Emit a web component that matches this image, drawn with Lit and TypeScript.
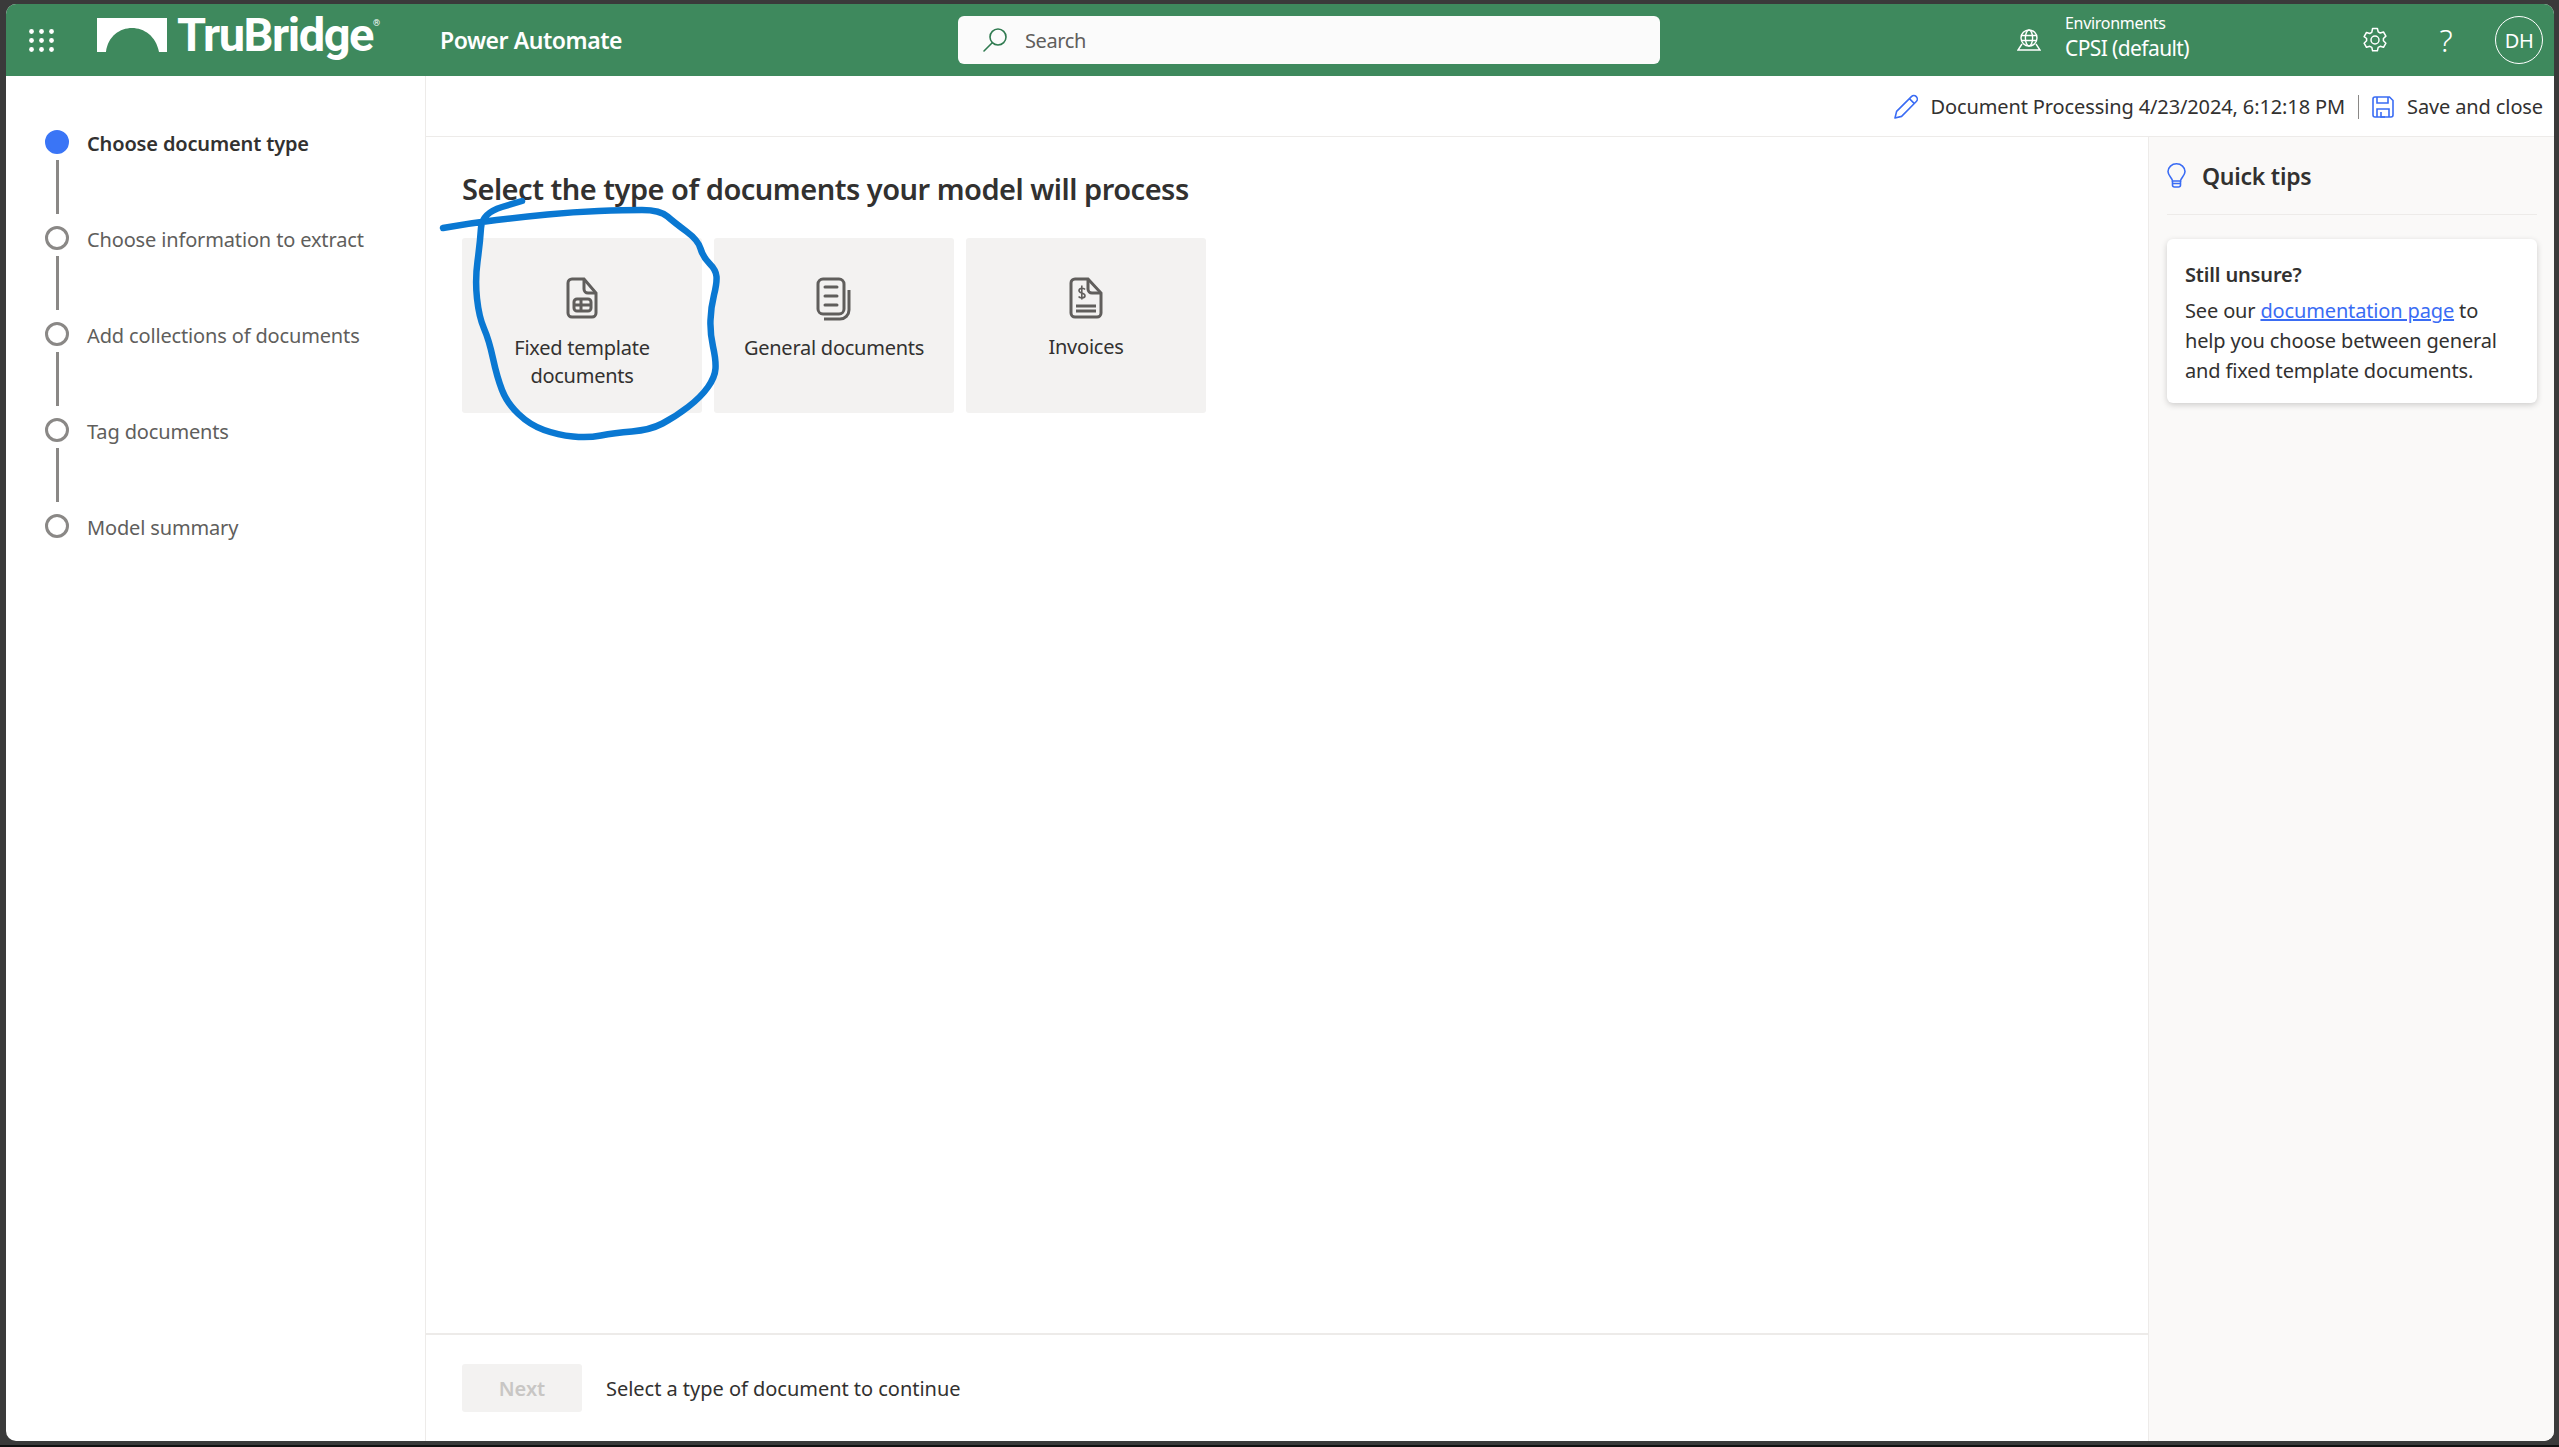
import { LitElement, css, html, svg } from "lit";
import { customElement } from "lit/decorators.js";

const steps = [
  "Choose document type",
  "Choose information to extract",
  "Add collections of documents",
  "Tag documents",
  "Model summary",
];

// freehand pen mark over the first card, points read off the screenshot
const scribble: [number, number][] = [
  [443, 228], [471, 223], [522, 217], [573, 212], [624, 210], [660, 210], [675, 223],
  [698, 240], [703, 257], [716, 270], [717, 283], [711, 307], [710, 333], [716, 360],
  [715, 377], [701, 397], [675, 417], [650, 430], [614, 433], [588, 438], [558, 435],
  [530, 425], [507, 403], [497, 377], [489, 340], [479, 317], [475, 280], [480, 243],
  [482, 213], [522, 201],
];

function smooth(points: [number, number][]) {
  let d = `M${points[0][0]} ${points[0][1]}`;
  for (let i = 1; i < points.length - 1; i++) {
    const mx = (points[i][0] + points[i + 1][0]) / 2;
    const my = (points[i][1] + points[i + 1][1]) / 2;
    d += ` Q${points[i][0]} ${points[i][1]} ${mx} ${my}`;
  }
  const last = points[points.length - 1];
  return `${d} L${last[0]} ${last[1]}`;
}

const fixedIcon = svg`<svg class="doc" width="32" height="42" viewBox="0 0 32 42" fill="none" stroke="#605e5c" stroke-width="3">
  <path d="M6 2h12l12 14v20a4 4 0 0 1-4 4H6a4 4 0 0 1-4-4V6a4 4 0 0 1 4-4z"/>
  <path d="M18 2v10a4 4 0 0 0 4 4h8"/>
  <rect x="8" y="22" width="17" height="12" rx="3"/>
  <path d="M8 28h17M15 22v12"/>
</svg>`;

const generalIcon = svg`<svg class="doc tall" width="36" height="44" viewBox="0 0 36 44" fill="none" stroke="#605e5c" stroke-width="3">
  <rect x="2" y="2" width="26" height="35" rx="5"/>
  <path d="M9 10h12M9 19h12M9 28h12" stroke-linecap="round"/>
  <path d="M33 13v20a9 9 0 0 1-9 9H8"/>
</svg>`;

const invoiceIcon = svg`<svg class="doc short" width="34" height="42" viewBox="0 0 34 42" fill="none" stroke="#605e5c" stroke-width="3">
  <path d="M6 2h13l13 14v20a4 4 0 0 1-4 4H6a4 4 0 0 1-4-4V6a4 4 0 0 1 4-4z"/>
  <path d="M19 2v10a4 4 0 0 0 4 4h9"/>
  <path d="M7 29h20M7 34h20"/>
  <path stroke-width="1.6" d="M16 12.5c-1-1.6-5.5-1.8-6 .8-.5 3.4 6.2 2.2 6 5.6-.2 2.6-5.2 2.4-6.4.6M12.8 8.5v14"/>
</svg>`;

@customElement("app-root")
export class AppRoot extends LitElement {
  static styles = css`
    * {
      box-sizing: border-box;
    }

    :host {
      display: block;
      position: relative;
      box-sizing: border-box;
      height: 1447px;
      padding: 4px 5px 4px 6px;
      background: #3a3a3a;
      border-bottom: 2px solid #111;
      font-family: "Noto Sans", "Open Sans", sans-serif;
      font-size: 20px;
      color: #323130;
    }

    .window {
      display: flex;
      flex-direction: column;
      height: 100%;
      background: #fff;
      border-radius: 10px;
      overflow: hidden;
    }

    .top {
      display: flex;
      align-items: center;
      flex: none;
      height: 72px;
      background: #3e895d;
      color: #fff;
    }

    .waffle {
      margin-left: 23px;
      flex: none;
    }

    .logo {
      display: flex;
      align-items: center;
      margin: 0 0 11px 43px;
      width: 343px;
      flex: none;
    }

    .wordmark {
      margin-left: 10px;
      font-family: Roboto, sans-serif;
      font-weight: 700;
      font-size: 47px;
      letter-spacing: -1.5px;
      line-height: 50px;
    }

    .reg {
      align-self: flex-start;
      margin: 8px 0 0 0;
      font-family: Roboto, sans-serif;
      font-size: 9px;
    }

    .product {
      width: 518px;
      flex: none;
      font-size: 23px;
      font-weight: 600;
      letter-spacing: -0.45px;
    }

    .search {
      display: flex;
      align-items: center;
      gap: 17px;
      width: 702px;
      height: 48px;
      flex: none;
      padding-left: 24px;
      background: #fbfbfb;
      border-radius: 6px;
      color: #605e5c;
      font-size: 20px;
      letter-spacing: -0.4px;
    }

    .env {
      display: flex;
      align-items: center;
      gap: 24px;
      margin-left: 357px;
      width: 345px;
      flex: none;
    }

    .env-text {
      display: flex;
      flex-direction: column;
      padding-bottom: 6px;
    }

    .env-label {
      font-size: 16px;
      line-height: 23px;
      letter-spacing: -0.3px;
    }

    .env-name {
      font-size: 21px;
      line-height: 27px;
      letter-spacing: -0.6px;
    }

    .top-actions {
      display: flex;
      align-items: center;
      flex: none;
    }

    .help {
      margin-left: 50px;
      font-size: 31px;
      font-weight: 300;
      line-height: 1;
      width: 16px;
      text-align: center;
    }

    .avatar {
      display: flex;
      align-items: center;
      justify-content: center;
      width: 48px;
      height: 48px;
      margin-left: 41px;
      border: 1px solid #fff;
      border-radius: 50%;
      font-size: 20px;
      letter-spacing: -0.5px;
    }

    .body {
      display: flex;
      flex: 1;
      min-height: 0;
    }

    .steps {
      width: 420px;
      flex: none;
      padding: 54px 0 0 39px;
      border-right: 1px solid #edebe9;
    }

    .step {
      display: flex;
      gap: 18px;
      height: 96px;
      color: #605e5c;
      font-size: 20px;
      letter-spacing: -0.15px;
      line-height: 24px;
    }

    .step span {
      padding-top: 2px;
    }

    .step.active {
      color: #323130;
      font-weight: 600;
    }

    .rail {
      display: flex;
      flex-direction: column;
      align-items: center;
      flex: none;
      width: 24px;
    }

    .dot {
      width: 24px;
      height: 24px;
      flex: none;
      border: 3px solid #8a8886;
      border-radius: 50%;
    }

    .active .dot {
      background: #3a75f6;
      border-color: #3a75f6;
    }

    .line {
      width: 3px;
      height: 54px;
      margin-top: 6px;
      background: #8a8886;
    }

    .right {
      display: flex;
      flex-direction: column;
      flex: 1;
      min-width: 0;
    }

    .command {
      display: flex;
      align-items: center;
      justify-content: flex-end;
      flex: none;
      height: 61px;
      padding: 1px 11px 0 0;
      border-bottom: 1px solid #edebe9;
      font-size: 20px;
      letter-spacing: -0.12px;
    }

    .pencil {
      margin-right: 12px;
    }

    .sep {
      width: 1px;
      height: 24px;
      margin: 0 13px;
      background: #8a8886;
    }

    .save {
      margin-right: 13px;
    }

    .columns {
      display: flex;
      flex: 1;
      min-height: 0;
    }

    .main {
      display: flex;
      flex-direction: column;
      flex: 1;
      min-width: 0;
    }

    .content {
      flex: 1;
      padding: 31px 0 0 36px;
    }

    h1 {
      margin: 0 0 29px;
      font-size: 29px;
      font-weight: 600;
      line-height: 41px;
      letter-spacing: -0.5px;
    }

    .cards {
      display: flex;
      gap: 12px;
    }

    .card {
      display: flex;
      flex-direction: column;
      align-items: center;
      width: 240px;
      height: 175px;
      padding: 39px 20px 0;
      background: #f3f2f1;
      border-radius: 3px;
      text-align: center;
      font-size: 20px;
      line-height: 28px;
      letter-spacing: -0.25px;
    }

    .doc {
      flex: none;
      margin-bottom: 15px;
    }

    .doc.tall {
      margin-bottom: 13px;
    }

    .doc.short {
      margin-bottom: 14px;
    }

    .footer {
      display: flex;
      align-items: center;
      gap: 24px;
      flex: none;
      height: 108px;
      padding-left: 36px;
      border-top: 2px solid #edebe9;
      font-size: 20px;
      letter-spacing: -0.03px;
    }

    .next {
      width: 120px;
      height: 48px;
      padding: 0;
      border: 0;
      border-radius: 3px;
      background: #f3f2f1;
      color: #c8c6c4;
      font: inherit;
      font-weight: 600;
    }

    .tips {
      width: 406px;
      flex: none;
      padding: 0 17px 0 18px;
      background: #faf9f8;
      border-left: 1px solid #edebe9;
    }

    .tips-head {
      display: flex;
      align-items: center;
      gap: 16px;
      height: 78px;
      border-bottom: 1px solid #edebe9;
      font-size: 23px;
      font-weight: 600;
      letter-spacing: -0.25px;
    }

    .tip {
      height: 164px;
      margin-top: 24px;
      padding: 21px 18px;
      background: #fff;
      border-radius: 6px;
      box-shadow: 0 2px 6px rgba(0, 0, 0, 0.18);
      font-size: 20px;
      line-height: 30px;
      letter-spacing: -0.15px;
    }

    .tip b {
      display: block;
      margin-bottom: 6px;
      font-weight: 600;
    }

    .tip a {
      color: #3a6cf4;
      text-decoration: underline;
    }

    .pen {
      position: absolute;
      top: 0;
      left: 0;
      pointer-events: none;
    }
  `;

  render() {
    return html`
      <div class="window">
        <header class="top">
          <svg class="waffle" width="25" height="23" viewBox="0 0 25 23" fill="#fff">
            ${[2.5, 11.5, 20.5].map((y) =>
              [2.5, 12.5, 22.5].map((x) => svg`<circle cx=${x} cy=${y} r="2.4"></circle>`)
            )}
          </svg>
          <div class="logo">
            <svg width="70" height="34" viewBox="0 0 70 34" fill="#fff">
              <path d="M0 0h70v34h-8C59 18 47 10 35 10S11 18 9 34H0z"></path>
            </svg>
            <span class="wordmark">TruBridge</span><span class="reg">®</span>
          </div>
          <div class="product">Power Automate</div>
          <div class="search">
            <svg width="26" height="26" viewBox="0 0 26 26" fill="none" stroke="#2f7a50" stroke-width="1.6">
              <circle cx="16" cy="10" r="8"></circle>
              <path d="M10 16L2 24" stroke-linecap="round"></path>
            </svg>
            <span>Search</span>
          </div>
          <div class="env">
            <svg width="24" height="22" viewBox="0 0 24 22" fill="none" stroke="#fff" stroke-width="1.4">
              <circle cx="12" cy="9" r="8"></circle>
              <ellipse cx="12" cy="9" rx="3.6" ry="8"></ellipse>
              <path d="M4 6.500h16M4 11.500h16"></path>
              <path d="M5 15l-4 6h22l-4-6"></path>
            </svg>
            <div class="env-text">
              <span class="env-label">Environments</span>
              <span class="env-name">CPSI (default)</span>
            </div>
          </div>
          <div class="top-actions">
            <svg width="26" height="26" viewBox="0 0 26 26" fill="none" stroke="#fff" stroke-width="1.5">
              <path d="M10.6 1.5h4.8l.8 3.4 2 1.1 3.3-1 2.4 4.1-2.5 2.4v2.3l2.5 2.4-2.4 4.1-3.3-1-2 1.1-.8 3.4h-4.8l-.8-3.4-2-1.1-3.3 1-2.4-4.1 2.5-2.4v-2.3L2.1 9.6l2.4-4.1 3.3 1 2-1.1z" stroke-linejoin="round"></path>
              <circle cx="13" cy="13" r="4"></circle>
            </svg>
            <span class="help">?</span>
            <div class="avatar">DH</div>
          </div>
        </header>
        <div class="body">
          <nav class="steps">
            ${steps.map(
              (label, i) => html`
                <div class="step ${i === 0 ? "active" : ""}">
                  <div class="rail">
                    <div class="dot"></div>
                    ${i < steps.length - 1 ? html`<div class="line"></div>` : ""}
                  </div>
                  <span>${label}</span>
                </div>
              `
            )}
          </nav>
          <div class="right">
            <div class="command">
              <svg class="pencil" width="26" height="26" viewBox="0 0 26 26" fill="none" stroke="#3a6cf4" stroke-width="1.6">
                <path d="M2 24l1.6-6.6L18.4 2.6a3 3 0 0 1 4.9 4.9L8.6 22.4z" stroke-linejoin="round"></path>
                <path d="M16.4 4.6l5 5"></path>
              </svg>
              <span>Document Processing 4/23/2024, 6:12:18 PM</span>
              <span class="sep"></span>
              <svg class="save" width="22" height="22" viewBox="0 0 22 22" fill="none" stroke="#3a6cf4" stroke-width="1.6">
                <path d="M1 3a2 2 0 0 1 2-2h14.5L21 4.5V19a2 2 0 0 1-2 2H3a2 2 0 0 1-2-2z"></path>
                <path d="M5 1v6h11V1M5 21v-8h12v8M9 16v5h4"></path>
              </svg>
              <span>Save and close</span>
            </div>
            <div class="columns">
              <main class="main">
                <div class="content">
                  <h1>Select the type of documents your model will process</h1>
                  <div class="cards">
                    <div class="card">${fixedIcon}<span>Fixed template documents</span></div>
                    <div class="card">${generalIcon}<span>General documents</span></div>
                    <div class="card">${invoiceIcon}<span>Invoices</span></div>
                  </div>
                </div>
                <div class="footer">
                  <button class="next" disabled>Next</button>
                  <span>Select a type of document to continue</span>
                </div>
              </main>
              <aside class="tips">
                <div class="tips-head">
                  <svg width="19" height="25" viewBox="0 0 19 25" fill="none" stroke="#3a6cf4" stroke-width="1.6">
                    <path d="M5.5 18c0-3-4.5-5-4.5-9.5a8.5 7.7 0 0 1 17 0C18 13 13.500 15 13.500 18z"></path>
                    <path d="M5.500 18v4a2 2 0 0 0 2 2h4a2 2 0 0 0 2-2v-4M5.500 20.500h8"></path>
                  </svg>
                  <span>Quick tips</span>
                </div>
                <div class="tip">
                  <b>Still unsure?</b>
                  See our <a href="#">documentation page</a> to help you choose between general and fixed template documents.
                </div>
              </aside>
            </div>
          </div>
        </div>
      </div>
      <svg class="pen" width="2559" height="1447" fill="none" stroke="#0a78d2" stroke-width="6.5" stroke-linecap="round" stroke-linejoin="round">
        <path d=${smooth(scribble)}></path>
      </svg>
    `;
  }
}

declare global {
  interface HTMLElementTagNameMap {
    "app-root": AppRoot;
  }
}
